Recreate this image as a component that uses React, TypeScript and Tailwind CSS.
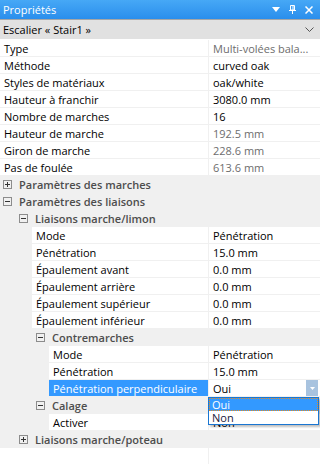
import React from "react";

type Row =
  | { kind: "prop"; level: number; label: string; value: string; muted?: boolean; selected?: boolean }
  | { kind: "cat"; level: number; label: string; open: boolean };

const rows: Row[] = [
  { kind: "prop", level: 0, label: "Type", value: "Multi-volées bala...", muted: true },
  { kind: "prop", level: 0, label: "Méthode", value: "curved oak" },
  { kind: "prop", level: 0, label: "Styles de matériaux", value: "oak/white" },
  { kind: "prop", level: 0, label: "Hauteur à franchir", value: "3080.0 mm" },
  { kind: "prop", level: 0, label: "Nombre de marches", value: "16" },
  { kind: "prop", level: 0, label: "Hauteur de marche", value: "192.5 mm", muted: true },
  { kind: "prop", level: 0, label: "Giron de marche", value: "228.6 mm", muted: true },
  { kind: "prop", level: 0, label: "Pas de foulée", value: "613.6 mm", muted: true },
  { kind: "cat", level: 0, label: "Paramètres des marches", open: false },
  { kind: "cat", level: 0, label: "Paramètres des liaisons", open: true },
  { kind: "cat", level: 1, label: "Liaisons marche/limon", open: true },
  { kind: "prop", level: 2, label: "Mode", value: "Pénétration" },
  { kind: "prop", level: 2, label: "Pénétration", value: "15.0 mm" },
  { kind: "prop", level: 2, label: "Épaulement avant", value: "0.0 mm" },
  { kind: "prop", level: 2, label: "Épaulement arrière", value: "0.0 mm" },
  { kind: "prop", level: 2, label: "Épaulement supérieur", value: "0.0 mm" },
  { kind: "prop", level: 2, label: "Épaulement inférieur", value: "0.0 mm" },
  { kind: "cat", level: 2, label: "Contremarches", open: true },
  { kind: "prop", level: 3, label: "Mode", value: "Pénétration" },
  { kind: "prop", level: 3, label: "Pénétration", value: "15.0 mm" },
  { kind: "prop", level: 3, label: "Pénétration perpendiculaire", value: "Oui", selected: true },
  { kind: "cat", level: 2, label: "Calage", open: true },
  { kind: "prop", level: 3, label: "Activer", value: "Non" },
  { kind: "cat", level: 1, label: "Liaisons marche/poteau", open: false },
];

// left offset of the white cell for each property level
const propIndent = ["pl-0", "pl-[16px]", "pl-[32px]", "pl-[49px]"];
const catIndent = ["pl-[3px]", "pl-[19px]", "pl-[36px]"];

const Toggle = ({ open }: { open: boolean }) => (
  <svg width="9" height="9" viewBox="0 0 9 9" className="shrink-0">
    <rect x="0.5" y="0.5" width="8" height="8" fill="none" stroke="#8c8c8c" />
    <path d="M2 4.5h5" stroke="#333" />
    {!open && <path d="M4.5 2v5" stroke="#333" />}
  </svg>
);

const CatRow = ({ row }: { row: Extract<Row, { kind: "cat" }> }) => (
  <div className={`h-[17px] bg-[#f0f0f0] flex items-center ${catIndent[row.level]}`}>
    <Toggle open={row.open} />
    <span className="ml-[7px] font-semibold text-[#4d4d4d] whitespace-nowrap">{row.label}</span>
  </div>
);

const PropRow = ({ row }: { row: Extract<Row, { kind: "prop" }> }) => (
  <div className="h-[17px] bg-[#f0f0f0] flex">
    <div className={`w-[208px] shrink-0 flex ${propIndent[row.level]}`}>
      <div
        className={`flex-1 h-[16px] flex items-center pl-[4px] whitespace-nowrap overflow-hidden ${
          row.selected ? "bg-[#3399ff] text-white" : "bg-white text-black"
        }`}
      >
        {row.label}
      </div>
    </div>
    <div className="flex-1 ml-px h-[16px] bg-white flex items-center">
      <span className={`pl-[4px] flex-1 whitespace-nowrap ${row.muted ? "text-[#6d6d6d]" : "text-black"}`}>
        {row.value}
      </span>
      {row.selected && (
        <div className="w-[12px] h-[16px] mr-[2px] bg-[#a8c3df] flex items-center justify-center">
          <svg width="5" height="3" viewBox="0 0 5 3">
            <path d="M0 0h5L2.5 3z" fill="#fff" />
          </svg>
        </div>
      )}
    </div>
  </div>
);

export default function App() {
  return (
    <div
      className="relative w-[320px] h-[464px] bg-white flex flex-col text-[11px] leading-none overflow-hidden"
      style={{ fontFamily: '"Open Sans", "Noto Sans", sans-serif' }}
    >
      {/* title bar */}
      <div className="h-[19px] bg-gradient-to-b from-[#46a8f6] to-[#2a8eec] flex items-center pl-[3px] text-white">
        <span className="flex-1">Propriétés</span>
        <div className="flex items-center gap-[9px] pr-[7px]">
          <svg width="8" height="5" viewBox="0 0 8 5">
            <path d="M0 0h8L4 5z" fill="#fff" />
          </svg>
          <svg width="7" height="9" viewBox="0 0 7 9">
            <path d="M1.5 0.5h4v4.5h-4zM0 5.5h7M3.5 5.5V9" stroke="#fff" fill="none" />
            <path d="M4 0.5v4.5" stroke="#fff" />
          </svg>
          <svg width="8" height="8" viewBox="0 0 8 8">
            <path d="M0.5 0.5l7 7M7.5 0.5l-7 7" stroke="#fff" strokeWidth="1.5" />
          </svg>
        </div>
      </div>

      {/* object selector */}
      <div className="h-[20px] border-t border-[#a6a6a6] bg-[#e1e1e1] flex items-center pl-[3px] pr-[6px] text-black">
        <span className="flex-1">Escalier « Stair1 »</span>
        <svg width="9" height="5" viewBox="0 0 9 5">
          <path d="M0.5 0.5l4 4 4-4" stroke="#555" fill="none" />
        </svg>
      </div>
      <div className="h-px bg-white" />

      {/* property grid */}
      <div className="flex flex-col">
        {rows.map((r, i) =>
          r.kind === "cat" ? <CatRow key={i} row={r} /> : <PropRow key={i} row={r} />
        )}
      </div>
      <div className="flex-1 flex">
        <div className="w-[208px] bg-white" />
        <div className="w-px bg-[#f0f0f0]" />
        <div className="flex-1 bg-white" />
      </div>

      {/* open dropdown list */}
      <div className="absolute left-[208px] top-[397px] w-[111px] border border-[#1a76d2] bg-white shadow-[2px_2px_2px_rgba(0,0,0,0.25)] flex flex-col">
        <div className="h-[13px] bg-[#3399ff] text-white border border-dotted border-[#e88a1a] flex items-center pl-[2px]">
          Oui
        </div>
        <div className="h-[13px] text-[#1a1a40] flex items-center pl-[3px]">Non</div>
      </div>
    </div>
  );
}
